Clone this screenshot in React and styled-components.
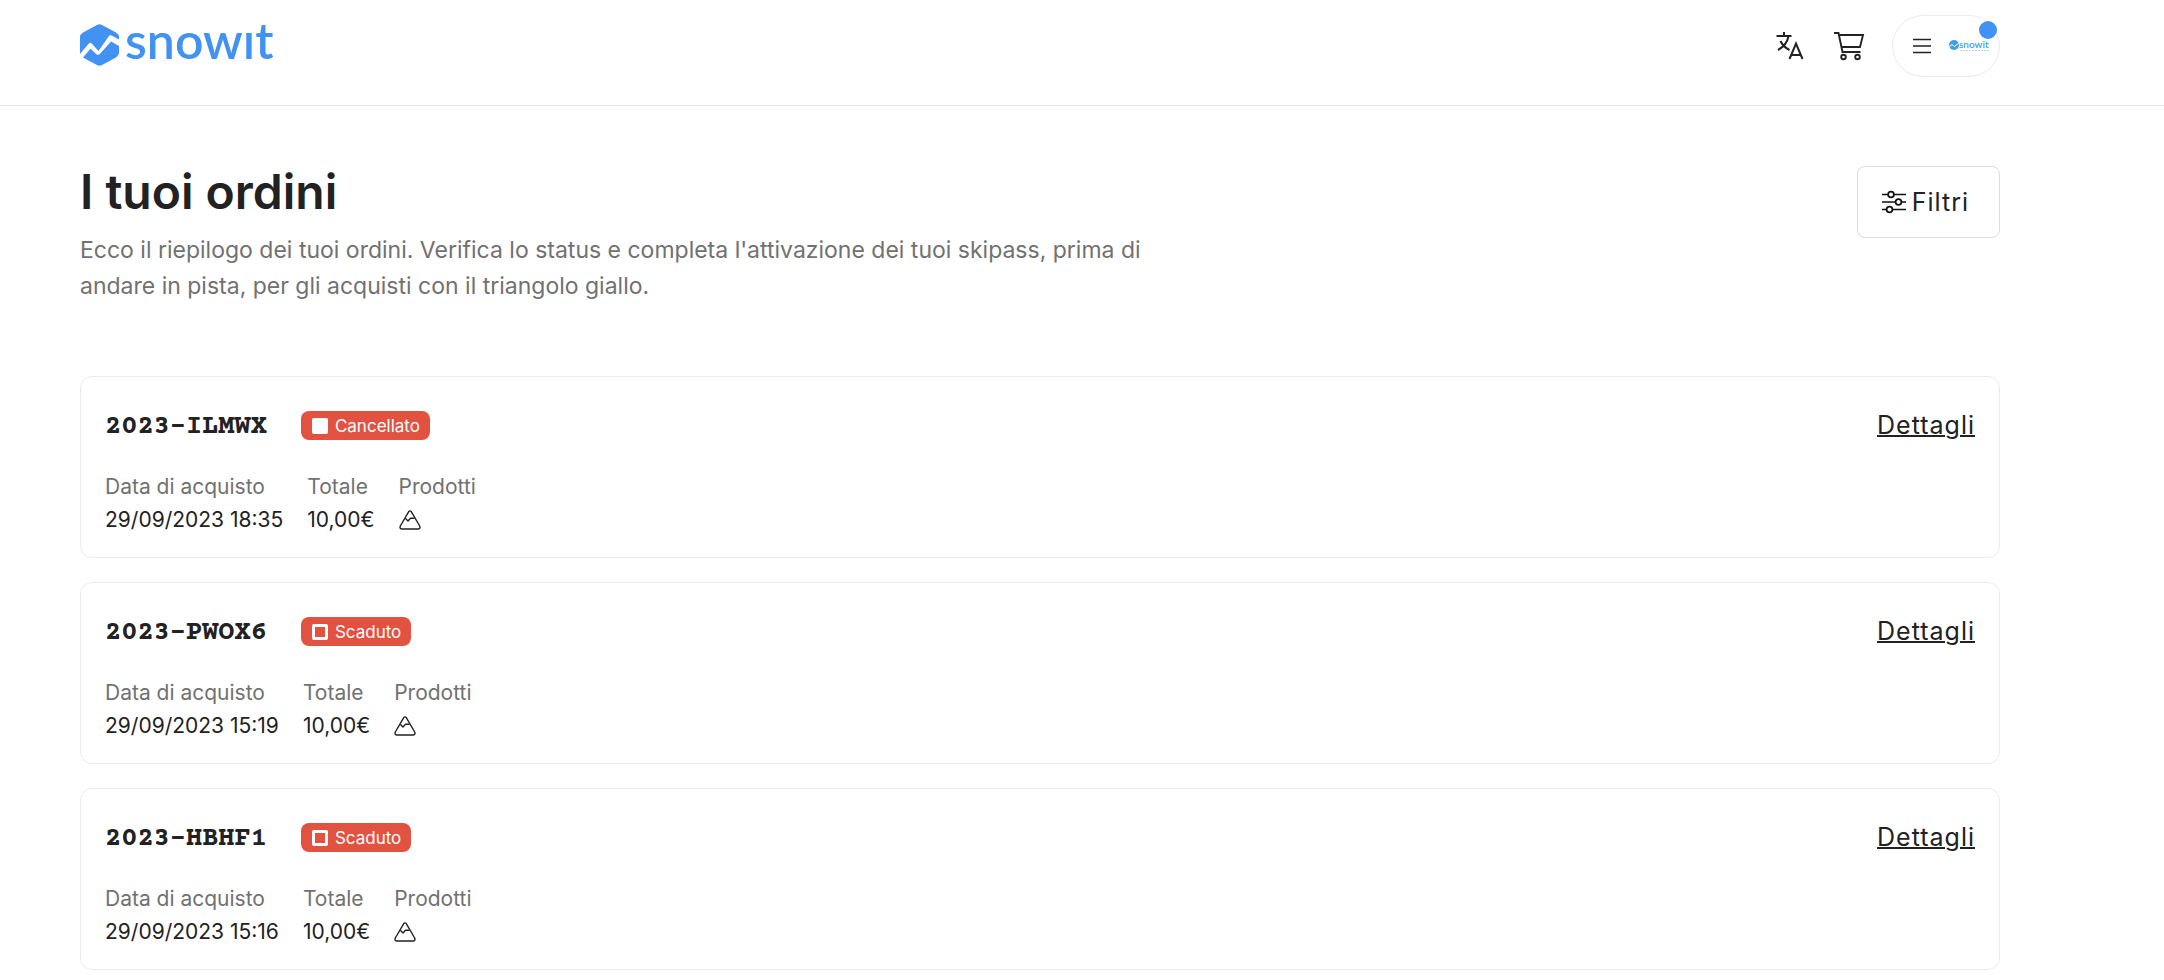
import React from "react";
import styled, { createGlobalStyle } from "styled-components";

const GlobalStyle = createGlobalStyle`
  *, *::before, *::after { box-sizing: border-box; }
  body {
    margin: 0;
    background: #fff;
    color: #222;
    font-family: Inter, Roboto, "Liberation Sans", sans-serif;
    font-size: 21px;
  }
  h1, h2, p, dl, dd, ul { margin: 0; padding: 0; }
  button { font: inherit; color: inherit; background: none; border: 0; padding: 0; cursor: pointer; }
  svg { display: block; flex: none; overflow: visible; }
`;

const Header = styled.header`
  display: flex;
  align-items: center;
  justify-content: space-between;
  padding: 15px 164px 28px 80px;
  border-bottom: 1px solid #e8e8e8;
`;

const LogoLink = styled.a`
  display: block;
  color: #4192f2;
`;

const Wordmark = styled.text`
  font-family: Lato, "Open Sans", sans-serif;
  font-weight: 600;
  font-size: ${(p) => p.$size}px;
  fill: currentColor;
`;

const Actions = styled.nav`
  display: flex;
  align-items: center;
  gap: 28px;
`;

const IconButton = styled.button`
  display: flex;
`;

const AccountButton = styled.button`
  position: relative;
  display: flex;
  align-items: center;
  gap: 18px;
  height: 62px;
  padding: 0 10px 0 20px;
  border: 1px solid #ebebeb;
  border-radius: 31px;
`;

const NotificationDot = styled.span`
  position: absolute;
  top: 5px;
  right: 2px;
  width: 18px;
  height: 18px;
  border-radius: 50%;
  background: #4192f2;
`;

const Main = styled.main`
  padding: 60px 164px 10px 80px;
`;

const Intro = styled.section`
  display: flex;
  align-items: flex-start;
  justify-content: space-between;
  gap: 48px;
  margin-bottom: 72px;
`;

const IntroText = styled.div`
  display: flex;
  flex-direction: column;
  gap: 14px;
  max-width: 1100px;
`;

const Title = styled.h1`
  font-size: 48px;
  line-height: 52px;
  font-weight: 600;
`;

const Description = styled.p`
  font-size: 23px;
  line-height: 36px;
  color: #717171;
`;

const FilterButton = styled.button`
  display: flex;
  align-items: center;
  gap: 6px;
  height: 72px;
  padding: 0 30px 0 24px;
  border: 1px solid #ddd;
  border-radius: 8px;
  font-size: 25px;
  letter-spacing: 1px;
`;

const OrderList = styled.ul`
  display: flex;
  flex-direction: column;
  gap: 24px;
  list-style: none;
`;

const OrderCard = styled.li`
  display: flex;
  flex-direction: column;
  gap: 20px;
  padding: 24px 24px 21px;
  border: 1px solid #ebebeb;
  border-radius: 12px;
`;

const OrderTop = styled.div`
  display: flex;
  align-items: center;
  height: 49px;
`;

const OrderCode = styled.h2`
  margin-right: 34px;
  padding-top: 2px;
  font-family: "Courier Prime", "Liberation Mono", monospace;
  font-size: 27px;
  line-height: 32px;
  font-weight: 700;
`;

const StatusBadge = styled.span`
  display: flex;
  align-items: center;
  gap: 7px;
  height: 29px;
  padding: 0 10px 0 11px;
  border-radius: 8px;
  background: #e15241;
  color: #fff;
  font-size: 17px;
  line-height: 20px;
`;

const StatusMark = styled.span`
  width: 16px;
  height: 16px;
  border: ${(p) => (p.$filled ? 8 : 3)}px solid #fff;
  border-radius: 2px;
`;

const DetailsLink = styled.a`
  margin-left: auto;
  padding-bottom: 2px;
  color: inherit;
  font-size: 25px;
  line-height: 30px;
  letter-spacing: 1px;
  text-decoration: underline;
  text-decoration-thickness: 2px;
`;

const OrderFacts = styled.dl`
  display: flex;
  gap: 24px;
  line-height: 33px;
`;

const FactLabel = styled.dt`
  color: #717171;
`;

const FactValue = styled.dd`
  display: flex;
  align-items: center;
  height: 33px;
`;

const Logo = () => (
  <svg width="200" height="44" viewBox="0 0 200 44" role="img" aria-label="snowit">
    <path
      fill="currentColor"
      d="M17 1Q19.500-.6 22 1L36 8.500Q39 10.500 39 13V15.500L31.500 11.500Q29.800 10.700 28.800 12.200L18.500 27L11.500 19.300Q10 17.900 8.800 19.500L0 30V13Q0 10.500 3 8.500ZM31 17.500L39 22V29Q39 31.500 36 33.500L22 41Q19.500 42.500 17 41L3 33.500L10.500 24.800L16.500 30.200Q18.500 31.700 20 29.800Z"
    />
    <Wordmark $size={50} x="45" y="35">snowıt</Wordmark>
  </svg>
);

const MiniLogo = () => (
  <svg width="40" height="14" viewBox="0 0 40 14" color="#3d9fe2" aria-hidden="true">
    <circle cx="5" cy="6" r="5" fill="currentColor" />
    <path d="M0 8L3 5.500L5.500 7.500L10 4" stroke="#fff" strokeWidth="1" fill="none" />
    <Wordmark $size={10} x="10" y="9">snowit</Wordmark>
    <path d="M11 11.500H40" stroke="#a9d5f3" strokeWidth="1" strokeDasharray="2 1" />
  </svg>
);

const TranslateIcon = () => (
  <svg width="30" height="28" viewBox="0 0 30 28" fill="none" stroke="#222" strokeWidth="2" aria-hidden="true">
    <path d="M.500 4H15.500M8 0V4M12.500 4C11.500 10 7.500 15 2 18M4.500 9C6 12.500 9.500 16 13.500 18" />
    <path d="M13.500 27L20 11.500L26.500 27M15.500 23H24.500" />
  </svg>
);

const CartIcon = () => (
  <svg width="30" height="28" viewBox="0 0 30 28" fill="none" stroke="#222" strokeWidth="1.900" aria-hidden="true">
    <path d="M0 1H4.500L8.500 20H26.500M5 3H29L26 15H7.500" />
    <circle cx="9.500" cy="25" r="2.300" />
    <circle cx="23.500" cy="25" r="2.300" />
  </svg>
);

const MenuIcon = () => (
  <svg width="18" height="16" viewBox="0 0 18 16" stroke="#222" strokeWidth="1.400" aria-hidden="true">
    <path d="M0 1.500H18M0 8H18M0 14.500H18" />
  </svg>
);

const FilterIcon = () => (
  <svg width="24" height="24" viewBox="0 0 24 24" fill="none" stroke="#111" strokeWidth="1.700" aria-hidden="true">
    <path d="M0 4.500H6M12 4.500H24M0 12H13.500M19.500 12H24M0 19.500H4.500M10.500 19.500H24" />
    <circle cx="9" cy="4.500" r="2.900" />
    <circle cx="16.500" cy="12" r="2.900" />
    <circle cx="7.500" cy="19.500" r="2.900" />
  </svg>
);

const MountainIcon = () => (
  <svg
    width="22"
    height="20"
    viewBox="0 0 22 20"
    fill="none"
    stroke="#222"
    strokeWidth="1.400"
    strokeLinejoin="round"
    role="img"
    aria-label="Skipass"
  >
    <path d="M9.600 1.800Q11 0 12.400 1.800L20.700 16Q21.700 18.800 19.300 19H2.700Q.3 18.800 1.300 16Z" />
    <path d="M6.300 8.200L9 11L11.500 8.300L15.600 8.200" />
  </svg>
);

const orders = [
  { code: "2023-ILMWX", status: "Cancellato", date: "29/09/2023 18:35", total: "10,00€" },
  { code: "2023-PWOX6", status: "Scaduto", date: "29/09/2023 15:19", total: "10,00€" },
  { code: "2023-HBHF1", status: "Scaduto", date: "29/09/2023 15:16", total: "10,00€" },
];

const Fact = ({ label, children }) => (
  <div>
    <FactLabel>{label}</FactLabel>
    <FactValue>{children}</FactValue>
  </div>
);

const Order = ({ code, status, date, total }) => (
  <OrderCard>
    <OrderTop>
      <OrderCode>{code}</OrderCode>
      <StatusBadge>
        <StatusMark $filled={status === "Cancellato"} />
        {status}
      </StatusBadge>
      <DetailsLink href={`#${code}`}>Dettagli</DetailsLink>
    </OrderTop>
    <OrderFacts>
      <Fact label="Data di acquisto">{date}</Fact>
      <Fact label="Totale">{total}</Fact>
      <Fact label="Prodotti">
        <MountainIcon />
      </Fact>
    </OrderFacts>
  </OrderCard>
);

export default function App() {
  return (
    <>
      <GlobalStyle />
      <Header>
        <LogoLink href="#home">
          <Logo />
        </LogoLink>
        <Actions>
          <IconButton aria-label="Lingua">
            <TranslateIcon />
          </IconButton>
          <IconButton aria-label="Carrello">
            <CartIcon />
          </IconButton>
          <AccountButton aria-label="Menu account">
            <MenuIcon />
            <MiniLogo />
            <NotificationDot />
          </AccountButton>
        </Actions>
      </Header>
      <Main>
        <Intro>
          <IntroText>
            <Title>I tuoi ordini</Title>
            <Description>
              Ecco il riepilogo dei tuoi ordini. Verifica lo status e completa l'attivazione dei
              tuoi skipass, prima di andare in pista, per gli acquisti con il triangolo giallo.
            </Description>
          </IntroText>
          <FilterButton>
            <FilterIcon />
            Filtri
          </FilterButton>
        </Intro>
        <OrderList>
          {orders.map((order) => (
            <Order key={order.code} {...order} />
          ))}
        </OrderList>
      </Main>
    </>
  );
}
